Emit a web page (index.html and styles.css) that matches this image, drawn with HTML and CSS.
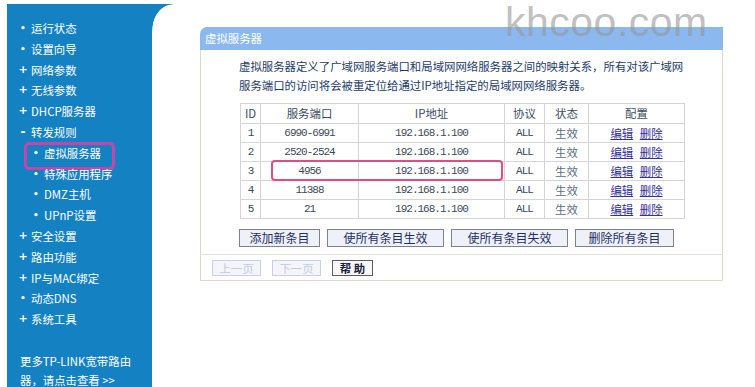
FILE: index.html
```html
<!DOCTYPE html>
<html lang="zh-CN">
<head>
<meta charset="utf-8">
<title>虚拟服务器</title>
<link rel="stylesheet" href="styles.css">
</head>
<body>
<div class="page">
  <nav class="sidebar">
    <ul class="menu">
      <li class="dot">运行状态</li>
      <li class="dot">设置向导</li>
      <li class="plus">网络参数</li>
      <li class="plus">无线参数</li>
      <li class="plus">DHCP服务器</li>
      <li class="minus">转发规则</li>
      <li class="dot sub marked">虚拟服务器</li>
      <li class="dot sub">特殊应用程序</li>
      <li class="dot sub">DMZ主机</li>
      <li class="dot sub">UPnP设置</li>
      <li class="plus">安全设置</li>
      <li class="plus">路由功能</li>
      <li class="plus">IP与MAC绑定</li>
      <li class="dot">动态DNS</li>
      <li class="plus">系统工具</li>
    </ul>
    <p class="more">更多TP-LINK宽带路由<br>器，请点击查看 &gt;&gt;</p>
  </nav>
  <main class="main">
    <section class="panel">
      <h1 class="panel-title">虚拟服务器</h1>
      <div class="panel-body">
        <p class="desc">虚拟服务器定义了广域网服务端口和局域网网络服务器之间的映射关系，所有对该广域网<br>服务端口的访问将会被重定位给通过IP地址指定的局域网网络服务器。</p>
        <div class="table-wrap">
          <table class="rules">
            <colgroup>
              <col class="c-id"><col class="c-port"><col class="c-ip"><col class="c-proto"><col class="c-state"><col class="c-conf">
            </colgroup>
            <thead>
              <tr><th>ID</th><th>服务端口</th><th>IP地址</th><th>协议</th><th>状态</th><th>配置</th></tr>
            </thead>
            <tbody>
              <tr><td class="num">1</td><td class="num">6990-6991</td><td class="num">192.168.1.100</td><td class="num">ALL</td><td class="state">生效</td><td><a class="lnk">编辑</a> <a class="lnk">删除</a></td></tr>
              <tr><td class="num">2</td><td class="num">2520-2524</td><td class="num">192.168.1.100</td><td class="num">ALL</td><td class="state">生效</td><td><a class="lnk">编辑</a> <a class="lnk">删除</a></td></tr>
              <tr><td class="num">3</td><td class="num">4956</td><td class="num">192.168.1.100</td><td class="num">ALL</td><td class="state">生效</td><td><a class="lnk">编辑</a> <a class="lnk">删除</a></td></tr>
              <tr><td class="num">4</td><td class="num">11388</td><td class="num">192.168.1.100</td><td class="num">ALL</td><td class="state">生效</td><td><a class="lnk">编辑</a> <a class="lnk">删除</a></td></tr>
              <tr><td class="num">5</td><td class="num">21</td><td class="num">192.168.1.100</td><td class="num">ALL</td><td class="state">生效</td><td><a class="lnk">编辑</a> <a class="lnk">删除</a></td></tr>
            </tbody>
          </table>
          <div class="row-mark"></div>
        </div>
        <div class="actions">
          <button class="btn w-add">添加新条目</button>
          <button class="btn w-all">使所有条目生效</button>
          <button class="btn w-all">使所有条目失效</button>
          <button class="btn w-del">删除所有条目</button>
        </div>
      </div>
      <div class="panel-foot">
        <button class="nav-btn disabled">上一页</button>
        <button class="nav-btn disabled">下一页</button>
        <button class="nav-btn help">帮 助</button>
      </div>
    </section>
  </main>
  <div class="watermark">khcoo.com</div>
</div>
</body>
</html>
```
FILE: styles.css
```css
* { box-sizing: border-box; }
html, body { margin: 0; padding: 0; background: #fff; }
body {
  font-family: "Noto Sans CJK SC", "Liberation Sans", sans-serif;
  font-size: 11.4px;
  width: 755px;
  height: 387px;
  overflow: hidden;
}
.page {
  position: relative;
  display: flex;
  align-items: flex-start;
  height: 387px;
}

/* sidebar */
.sidebar {
  position: relative;
  margin: 4px 0 0 7px;
  width: 145px;
  height: 383px;
  background: #1481c3;
  color: #fff;
  padding-top: 14px;
}
.sidebar::after {
  content: "";
  position: absolute;
  left: 100%;
  top: 0;
  width: 21px;
  height: 26px;
  background: radial-gradient(21px 26px at 100% 100%, rgba(255,255,255,0) 97%, #1481c3 100%);
}
.menu { list-style: none; margin: 0; padding: 0 0 0 11px; }
.menu li {
  position: relative;
  height: 20.8px;
  line-height: 20.8px;
  display: flex;
  align-items: center;
  white-space: nowrap;
}
.menu li::before {
  display: inline-block;
  width: 10px;
  margin-right: 3px;
  text-align: center;
  font-family: "DejaVu Sans", sans-serif;
  font-weight: bold;
}
.menu li.dot::before { content: "•"; font-size: 9px; }
.menu li.plus::before { content: "+"; font-size: 11px; }
.menu li.minus::before { content: "-"; font-size: 12px; }
.menu li.sub { padding-left: 13px; }
.menu li.marked::after {
  content: "";
  position: absolute;
  left: 6px;
  top: -0.5px;
  width: 85px;
  height: 22px;
  border: 3px solid #c446a6;
  border-radius: 5px;
}
.more {
  margin: 22px 0 0 13px;
  line-height: 19px;
}

/* main */
.main { margin: 27px 0 0 48px; }
.panel { width: 523px; }
.panel-title {
  margin: 0;
  height: 23px;
  line-height: 23px;
  padding-left: 5px;
  background: #8bb9ef;
  color: #fff;
  font-size: 11.4px;
  font-weight: normal;
  border-radius: 7px 0 0 0;
}
.panel-body {
  border-left: 1px solid #ddd8cb;
  border-right: 1px solid #ddd8cb;
  border-bottom: 1px solid #e6e1d4;
  padding: 7px 0 7px 38px;
}
.desc {
  margin: 0;
  line-height: 19px;
  color: #1d3c68;
  white-space: nowrap;
}
.table-wrap {
  position: relative;
  margin: 8px 0 0 1px;
  width: 444px;
}
.rules {
  border-collapse: collapse;
  table-layout: fixed;
  width: 444px;
}
.c-id { width: 20px; }
.c-port { width: 98px; }
.c-ip { width: 146px; }
.c-proto { width: 40px; }
.c-state { width: 44px; }
.c-conf { width: 96px; }
.rules th, .rules td {
  border: 1px solid #d4d4d4;
  padding: 0;
  text-align: center;
  height: 19px;
  line-height: 17px;
  font-weight: normal;
  color: #35485e;
}
.rules th { height: 20px; color: #3a4c62; }
.rules td.num {
  font-family: "Liberation Mono", monospace;
  font-size: 11px;
  letter-spacing: -1px;
  color: #3c4a5a;
}
.rules td.state { color: #5a6d86; }
.lnk {
  color: #33309a;
  text-decoration: underline;
  margin: 0 2px;
}
.row-mark {
  position: absolute;
  left: 31px;
  top: 57px;
  width: 232px;
  height: 21px;
  border: 2px solid #df4c86;
  border-radius: 4px;
}
.actions {
  display: flex;
  gap: 7px;
  margin-top: 10px;
}
.btn {
  height: 18px;
  padding: 0;
  font: inherit;
  font-size: 12px;
  line-height: 16px;
  color: #1e2f62;
  background: #eef1fa;
  border: 1px solid #7f8288;
}
.w-add { width: 81px; }
.w-all { width: 117px; }
.w-del { width: 99px; }

.panel-foot {
  display: flex;
  gap: 11px;
  height: 26px;
  padding: 5px 0 0 11px;
  border-left: 1px solid #ddd8cb;
  border-right: 1px solid #ddd8cb;
  border-bottom: 1px solid #ddd8cb;
}
.nav-btn {
  height: 16px;
  width: 49px;
  padding: 0;
  font: inherit;
  font-size: 11.4px;
  line-height: 14px;
}
.nav-btn.disabled {
  color: #c3cbdb;
  background: #f3f5fb;
  border: 1px solid #c9d0de;
}
.nav-btn.help {
  width: 41px;
  color: #1a2440;
  font-weight: bold;
  background: #f8f8f8;
  border: 1px solid #5a5d66;
}

.watermark {
  position: absolute;
  left: 505px;
  top: 2px;
  font-family: "Liberation Sans", sans-serif;
  font-size: 41px;
  line-height: 41px;
  color: rgba(150,150,150,0.6);
  letter-spacing: 0.5px;
}
```
